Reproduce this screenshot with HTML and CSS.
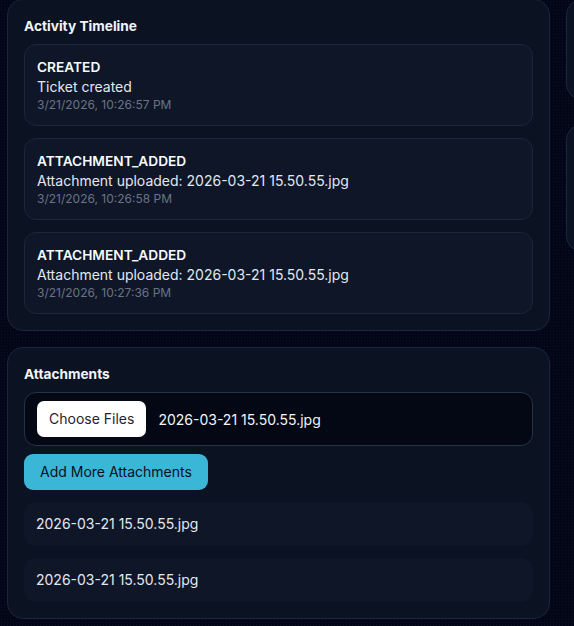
FILE: index.html
```html
<!DOCTYPE html>
<html>
<head>
<meta charset="utf-8">
<link rel="stylesheet" href="styles.css">
</head>
<body>
<div class="layout">
  <div class="col-main">
    <section class="card">
      <h2 class="card-title">Activity Timeline</h2>
      <div class="timeline">
        <div class="event">
          <div class="event-type">CREATED</div>
          <div class="event-msg">Ticket created</div>
          <div class="event-date">3/21/2026, 10:26:57 PM</div>
        </div>
        <div class="event">
          <div class="event-type">ATTACHMENT_ADDED</div>
          <div class="event-msg">Attachment uploaded: 2026-03-21 15.50.55.jpg</div>
          <div class="event-date">3/21/2026, 10:26:58 PM</div>
        </div>
        <div class="event">
          <div class="event-type">ATTACHMENT_ADDED</div>
          <div class="event-msg">Attachment uploaded: 2026-03-21 15.50.55.jpg</div>
          <div class="event-date">3/21/2026, 10:27:36 PM</div>
        </div>
      </div>
    </section>
    <section class="card">
      <h2 class="card-title">Attachments</h2>
      <div class="file-input">
        <span class="file-btn">Choose Files</span>
        <span class="file-name">2026-03-21 15.50.55.jpg</span>
      </div>
      <button class="add-btn">Add More Attachments</button>
      <div class="att-list">
        <div class="att-item">2026-03-21 15.50.55.jpg</div>
        <div class="att-item">2026-03-21 15.50.55.jpg</div>
      </div>
    </section>
  </div>
  <div class="col-side">
    <section class="card side-a"></section>
    <section class="card side-b"></section>
  </div>
</div>
</body>
</html>
```

FILE: styles.css
```css
html, body {
  margin: 0;
  padding: 0;
}
body {
  background-color: #030617;
  background-image: radial-gradient(rgba(120, 140, 190, 0.07) 0.8px, transparent 1px);
  background-size: 3px 3px;
  font-family: Inter, "Noto Sans", sans-serif;
  color: #e5e7eb;
  width: 574px;
  height: 626px;
  overflow: hidden;
}
.layout {
  display: grid;
  grid-template-columns: 543px 300px;
  gap: 16px;
  padding-left: 7px;
  margin-top: -1px;
  width: 567px;
  overflow: hidden;
}
.col-main {
  display: flex;
  flex-direction: column;
  gap: 16px;
}
.col-side {
  display: flex;
  flex-direction: column;
  gap: 24px;
}
.card {
  background: #0b1222;
  border: 1px solid #1c2638;
  border-radius: 16px;
  padding: 16px;
}
.side-a { height: 67px; }
.side-b { height: 94px; }
.card-title {
  margin: 0 0 8px;
  font-size: 13.7px;
  font-weight: 700;
  line-height: 20px;
  color: #f1f5f9;
}
.timeline {
  display: flex;
  flex-direction: column;
  gap: 12px;
}
.event {
  background: #0e1628;
  border: 1px solid #1c2638;
  border-radius: 12px;
  padding: 12px;
}
.event-type {
  font-size: 13.7px;
  font-weight: 600;
  line-height: 20px;
  color: #f8fafc;
}
.event-msg {
  font-size: 14px;
  line-height: 20px;
  color: #e2e8f0;
}
.event-date {
  font-size: 12px;
  line-height: 16px;
  color: #6b7483;
}
.file-input {
  display: flex;
  align-items: center;
  gap: 12px;
  background: #040814;
  border: 1px solid #283244;
  border-radius: 12px;
  padding: 8px 12px;
}
.file-btn {
  background: #ffffff;
  color: #1e2430;
  font-size: 14px;
  line-height: 20px;
  padding: 8px 12px;
  border-radius: 7px;
}
.file-name {
  font-size: 14px;
  color: #f1f5f9;
}
.add-btn {
  display: block;
  margin-top: 8px;
  background: #3ab7d6;
  color: #07101e;
  border: none;
  border-radius: 9px;
  font-family: Inter, "Noto Sans", sans-serif;
  font-size: 14px;
  line-height: 20px;
  padding: 8px 16px;
}
.att-list {
  display: flex;
  flex-direction: column;
  gap: 12px;
  margin-top: 12px;
}
.att-item {
  background: #0e1628;
  border-radius: 12px;
  padding: 12px;
  font-size: 14px;
  line-height: 20px;
  color: #e2e8f0;
}
```
